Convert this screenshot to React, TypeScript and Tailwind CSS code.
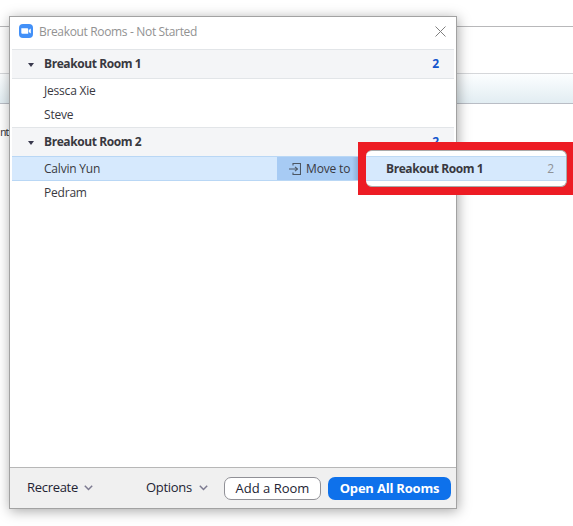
import React from "react";

function ZoomLogo() {
  return (
    <svg width="14" height="14" viewBox="0 0 14 14" className="block">
      <rect width="14" height="14" rx="4" fill="#4290f8" />
      <path d="M2.3 4.3h5.7c.8 0 1.2.5 1.2 1.2v4.3H3.6c-.8 0-1.3-.5-1.3-1.3z" fill="#fff" />
      <path d="M9.8 6.1 11.8 4.6v5L9.8 8.1z" fill="#fff" />
    </svg>
  );
}

function CloseIcon() {
  return (
    <svg width="11" height="11" viewBox="0 0 11 11" className="block">
      <path d="M.5.5l10 10M10.5.5l-10 10" stroke="#808080" strokeWidth="1" fill="none" />
    </svg>
  );
}

function Chevron() {
  return (
    <svg width="9" height="6" viewBox="0 0 9 6" className="block">
      <path d="M.8.8l3.7 3.7L8.2.8" stroke="#7c7a90" strokeWidth="1.5" fill="none" />
    </svg>
  );
}

function MoveIcon() {
  return (
    <svg width="12" height="12" viewBox="0 0 12 12" className="block">
      <path d="M4 2.5v-2h7.5v11H4v-2M0 6h8.5" stroke="#4c5663" strokeWidth="1.1" fill="none" />
      <path d="M6 3.8 8.4 6 6 8.2" stroke="#4c5663" strokeWidth="1.1" fill="none" />
    </svg>
  );
}

function RoomHeader({ name, count }: { name: string; count: number }) {
  return (
    <div className="flex h-[30px] items-center border-y border-[#e2e5e8] bg-[#f4f5f7] pr-[15px] pl-4 text-[12px] font-bold">
      <svg width="6" height="4" viewBox="0 0 6 4" className="mt-[2px] block">
        <path d="M0 0h6L3 4z" fill="#39394d" />
      </svg>
      <span className="ml-[10px] flex-1 tracking-[-0.42px]">{name}</span>
      <span className="text-[#1254cc]">{count}</span>
    </div>
  );
}

function Person({ name }: { name: string }) {
  return <div className="h-6 pl-8 text-[12px] leading-[24px] tracking-[-0.2px]">{name}</div>;
}

export default function App() {
  return (
    <div className="relative h-[526px] w-[573px] overflow-hidden bg-white font-['Open_Sans','Noto_Sans',sans-serif] text-[#39393f]">
      <div className="h-[27px] border-b border-[#b8b8ba]" />
      <div className="h-[47px] border-b border-[#d5d7da]" />
      <div className="h-[30px] border-b border-[#b9bdc5] bg-linear-to-b from-[#fcfeff] to-[#e2edf2]" />
      <div className="pt-[21px] font-['Liberation_Mono',monospace] text-[11px] leading-[16px] tracking-[-2.1px]">nt</div>

      <div className="absolute top-[16px] left-[9px] flex h-[493px] w-[448px] flex-col border border-[#a2a2a2] bg-white shadow-[1px_2px_12px_rgba(0,0,0,0.35)]">
        <div className="flex h-8 shrink-0 items-center pr-[10px] pl-[9px] pb-[4px]">
          <ZoomLogo />
          <span className="mt-px ml-[6px] flex-1 text-[12px] tracking-[-0.34px] text-[#929292]">Breakout Rooms - Not Started</span>
          <CloseIcon />
        </div>
        <div className="flex-1 px-[2px]">
          <RoomHeader name="Breakout Room 1" count={2} />
          <Person name="Jessca Xie" />
          <Person name="Steve" />
          <RoomHeader name="Breakout Room 2" count={2} />
          <div className="-mt-px flex h-[25px] border-y border-[#b9d7f5] bg-[#d6e9fd]">
            <div className="w-[265px]"><Person name="Calvin Yun" /></div>
            <div className="flex flex-1 items-center bg-[#a7cbf4] pl-3 text-[12px]">
              <MoveIcon />
              <span className="ml-[5px] tracking-[-0.15px]">Move to</span>
              <span className="ml-[2px] h-full w-[6px] bg-linear-to-r from-[#a7cbf4] to-[#8faed6]" />
            </div>
          </div>
          <Person name="Pedram" />
        </div>
        <div className="flex h-[41px] shrink-0 items-center border-t border-[#b7b7b7] bg-[#f0f0f0] pl-[17px] text-[13px] text-[#232333]">
          <span className="w-[51px] whitespace-nowrap tracking-[-0.3px]">Recreate</span>
          <span className="ml-[6px]"><Chevron /></span>
          <span className="ml-[53px] w-[46px] whitespace-nowrap tracking-[-0.3px]">Options</span>
          <span className="ml-[7px]"><Chevron /></span>
          <button className="ml-[16px] h-[23px] w-[97px] shrink-0 rounded-[7px] border border-[#909096] bg-white leading-[20px] whitespace-nowrap">Add a Room</button>
          <button className="ml-[7px] h-[23px] w-[123px] shrink-0 rounded-[7px] bg-[#0e71eb] leading-[22px] font-bold tracking-[-0.2px] whitespace-nowrap text-white">Open All Rooms</button>
        </div>
      </div>

      <div className="absolute top-[142px] left-[358px] h-[53px] w-[215px] border-8 border-r-[5px] border-[#ed1c24] bg-[#ed1c24]">
        <div className="h-[37px] w-[201px] rounded-[6px] border border-l-0 border-[#aaa] bg-white pt-[5px]">
          <div className="flex h-[25px] items-center border-y border-[#bedaf5] bg-[#d6e9fd] pr-[12px] pl-[20px] text-[12px]">
            <span className="flex-1 font-bold tracking-[-0.42px]">Breakout Room 1</span>
            <span className="text-[#8f9296]">2</span>
          </div>
        </div>
      </div>
    </div>
  );
}
